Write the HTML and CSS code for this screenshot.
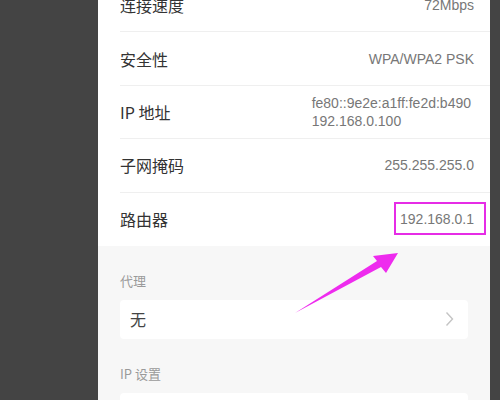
FILE: index.html
```
<!DOCTYPE html>
<html lang="zh-CN">
<head>
<meta charset="utf-8">
<link rel="stylesheet" href="styles.css">
</head>
<body>
<div class="screen">
  <div class="side"></div>
  <div class="panel">
    <div class="list">
      <div class="row"><span class="key">连接速度</span><span class="val">72Mbps</span></div>
      <div class="row"><span class="key">安全性</span><span class="val">WPA/WPA2 PSK</span></div>
      <div class="row"><span class="key">IP 地址</span><span class="val multi"><span>fe80::9e2e:a1ff:fe2d:b490</span><span>192.168.0.100</span></span></div>
      <div class="row"><span class="key">子网掩码</span><span class="val">255.255.255.0</span></div>
      <div class="row last"><span class="key">路由器</span><span class="val boxed">192.168.0.1</span></div>
    </div>
    <div class="settings">
      <div class="label">代理</div>
      <div class="card"><span class="card-text">无</span>
        <svg class="chev" width="9" height="16" viewBox="0 0 9 16"><path d="M1.5 1.5 L7.5 8 L1.5 14.5" fill="none" stroke="#c4c4c4" stroke-width="1.4"/></svg>
      </div>
      <div class="label">IP 设置</div>
      <div class="card"></div>
    </div>
  </div>
  <div class="side-r"></div>
</div>
<svg class="arrow" width="500" height="400" viewBox="0 0 500 400">
  <polygon points="295,313 377,261 373,256 398,253 386,273 381,267" fill="#ee2bee"/>
</svg>
</body>
</html>
```
FILE: styles.css
```
html, body {
  margin: 0;
  padding: 0;
}
body {
  width: 500px;
  height: 400px;
  overflow: hidden;
  background: #444444;
  font-family: "Liberation Sans", "Noto Sans CJK SC", sans-serif;
  position: relative;
}
.screen {
  display: flex;
  height: 400px;
  overflow: hidden;
}
.side {
  width: 98px;
  flex: none;
}
.side-r {
  width: 10px;
  flex: none;
}
.panel {
  width: 392px;
  flex: none;
  background: #f7f7f7;
  display: flex;
  flex-direction: column;
}
.list {
  background: #ffffff;
  margin-top: -21px;
  padding-left: 22px;
}
.row {
  height: 53.4px;
  box-sizing: border-box;
  border-bottom: 1px solid #efefef;
  display: flex;
  align-items: center;
  justify-content: space-between;
  padding-right: 16px;
}
.row.last {
  border-bottom: none;
}
.key {
  font-family: "Noto Sans CJK SC", sans-serif;
  font-size: 16px;
  color: #333333;
}
.val {
  font-size: 14px;
  color: #777777;
}
.multi {
  display: flex;
  flex-direction: column;
  line-height: 18px;
  margin-right: 3px;
}
.boxed {
  position: relative;
}
.boxed::after {
  content: "";
  position: absolute;
  left: -6px;
  right: -12px;
  top: -9px;
  bottom: -8px;
  border: 2.5px solid #e62ce6;
}
.settings {
  padding: 26px 22px 0 22px;
  display: flex;
  flex-direction: column;
}
.label {
  font-family: "Noto Sans CJK SC", sans-serif;
  font-size: 13px;
  line-height: 18px;
  color: #9a9a9a;
  margin-bottom: 10px;
}
.card {
  height: 39px;
  flex: none;
  background: #ffffff;
  border-radius: 4px;
  display: flex;
  align-items: center;
  justify-content: space-between;
  padding: 0 14px 0 10px;
  margin-bottom: 26px;
}
.card-text {
  font-family: "Noto Sans CJK SC", sans-serif;
  font-size: 16px;
  color: #444444;
}
.arrow {
  position: absolute;
  left: 0;
  top: 0;
}
```
